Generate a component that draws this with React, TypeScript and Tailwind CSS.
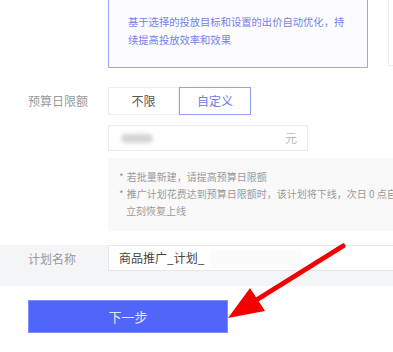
import React from 'react';

const font = { fontFamily: '"Noto Sans CJK SC", "Noto Sans", sans-serif' };

const App: React.FC = () => (
  <div className="relative w-[393px] h-[352px] overflow-hidden bg-white" style={font}>
    {/* white form card */}
    <div className="h-[249px] bg-white">
      <div className="flex">
        <div className="shrink-0 ml-[108px] w-[260px] h-[68px] border border-t-0 border-[#9aa6ee] bg-[#fcfcff] pl-[19px] pt-[13px] text-[10.3px] leading-[18px] text-[#7281ee]">
          <p>基于选择的投放目标和设置的出价自动优化，持</p>
          <p>续提高投放效率和效果</p>
        </div>
        <div className="shrink-0 ml-[20px] w-[20px] h-[66px] border border-t-0 border-[#ececec] bg-white"></div>
      </div>

      <div className="mt-[19px] flex items-center">
        <span className="w-[108px] pl-[28px] text-[12px] text-[#999]">预算日限额</span>
        <div className="flex">
          <div className="w-[71px] h-[28px] flex items-center justify-center border border-[#eee] text-[12px] text-[#555]">不限</div>
          <div className="w-[72px] h-[28px] flex items-center justify-center border border-[#93a1f2] text-[12px] text-[#6a7bef]">自定义</div>
        </div>
      </div>

      <div className="mt-[10px] ml-[108px] w-[200px] h-[26px] border border-[#ececec] flex items-center justify-between pl-[12px] pr-[10px]">
        <div className="w-[32px] h-[9px] rounded-full bg-[#d4d4d4] blur-[2px]"></div>
        <span className="text-[12px] text-[#bbb]">元</span>
      </div>

      <div className="mt-[7px] ml-[108px] h-[73px] bg-[#f9f9fa] pt-[10px] pl-[11px] text-[10px] leading-[17px] text-[#9a9a9a] whitespace-nowrap overflow-hidden">
        <p><span className="mr-[3px]">*</span>若批量新建，请提高预算日限额</p>
        <p><span className="mr-[3px]">*</span>推广计划花费达到预算日限额时，该计划将下线，次日 0 点自</p>
        <p className="pl-[7px]">立刻恢复上线</p>
      </div>
    </div>

    {/* grey strip with plan name */}
    <div className="h-[41px] bg-[#f4f5f7]">
      <div className="-mt-[4px] flex items-center">
        <span className="w-[108px] pl-[28px] pt-[2px] text-[12px] text-[#999]">计划名称</span>
        <div className="flex-1 h-[26px] border border-r-0 border-[#e6e6e6] bg-white flex items-center pl-[10px]">
          <span className="text-[12px] text-[#444]">商品推广_计划_</span>
          <div className="ml-[6px] w-[92px] h-[18px] bg-[#fbfbfb] blur-[1px]"></div>
        </div>
      </div>
    </div>

    {/* footer */}
    <div className="pt-[14px] pl-[28px]">
      <button className="w-[200px] h-[33px] bg-[#5066fb] text-[13px] text-[#e4e8ff] border border-[#7d8dfb]">下一步</button>
    </div>

    {/* red annotation arrow */}
    <svg className="absolute left-0 top-0 pointer-events-none" width="393" height="352" viewBox="0 0 393 352">
      <line x1="343" y1="246" x2="250" y2="304" stroke="#f50000" strokeWidth="5" strokeLinecap="round" />
      <polygon points="228,318 250,288 265,311" fill="#f50000" />
    </svg>
  </div>
);

export default App;
